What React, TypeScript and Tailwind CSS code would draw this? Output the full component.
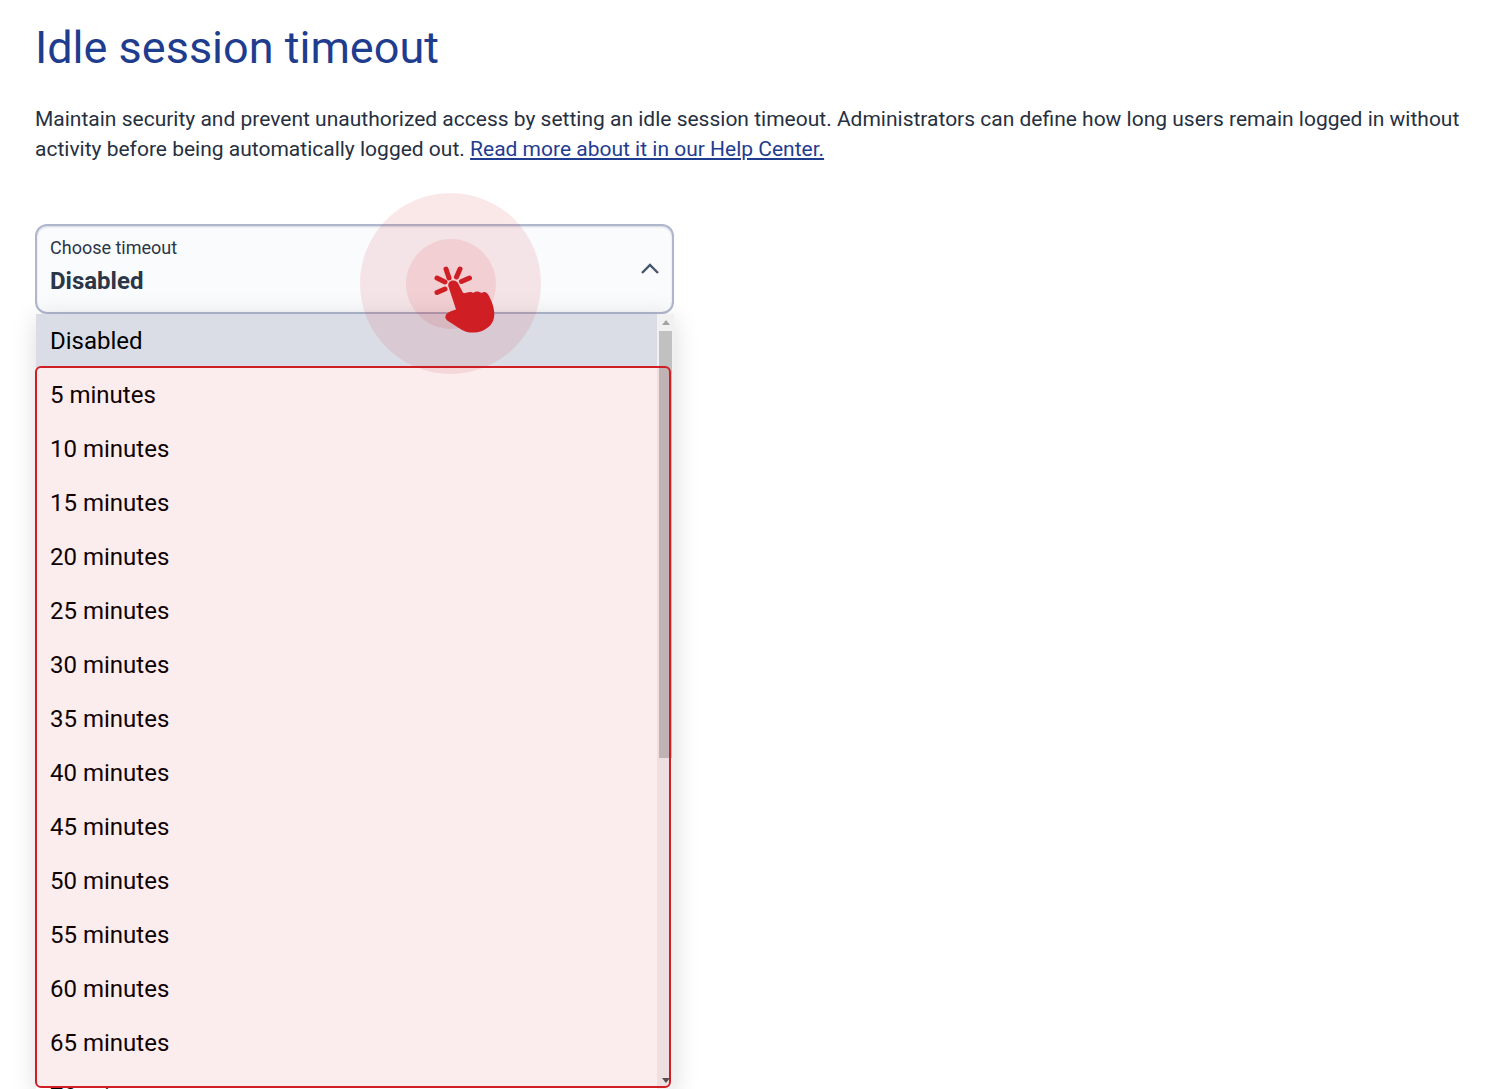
const options = [
  "Disabled",
  "5 minutes",
  "10 minutes",
  "15 minutes",
  "20 minutes",
  "25 minutes",
  "30 minutes",
  "35 minutes",
  "40 minutes",
  "45 minutes",
  "50 minutes",
  "55 minutes",
  "60 minutes",
  "65 minutes",
  "70 minutes",
];

function ClickMarker() {
  return (
    <div className="absolute left-[360px] top-[193px] flex h-[181px] w-[181px] items-center justify-center rounded-full bg-[#cf1f25]/10">
      <div className="h-[90px] w-[90px] rounded-full bg-[#cf1f25]/10" />
      <svg viewBox="0 0 100 100" className="absolute left-[45px] top-[47px] h-[100px] w-[100px]" fill="#cf1f25">
        <path d="M43.3 46C42.8 43 45 40.5 48 40.5C51 40.5 53 42 54 45L58 52.800C60 54 63 51.500 66 52C67.500 52.800 68 53 69 52.500C71 51 73.500 51.500 75.500 52.500C76.500 53 77.500 53 78 52.300C80 51.500 82.500 52.500 84 56C87 62 89.500 68 89.300 75C89 83 84 88 77 91C70 93.500 62 93 57 90L43 81C40 79 39.500 76 42 73.500C45 71 48 70.500 51 69.500Z" />
        <g stroke="#cf1f25" strokeWidth="5" strokeLinecap="round">
          <path d="M41 29L44 38" />
          <path d="M55 29L51.500 37" />
          <path d="M32 38L40 42" />
          <path d="M64.500 38L56.500 41.500" />
          <path d="M32 52.500L40 49" />
        </g>
      </svg>
    </div>
  );
}

export default function App() {
  return (
    <div className="relative h-[1089px] overflow-hidden bg-white font-['Roboto',sans-serif]">
      <div className="pl-[35px] pr-[30px] pt-[20px]">
        <h1 className="text-[45px] leading-[56px] font-normal text-[#1f3d8f]">Idle session timeout</h1>
        <p className="mt-[28px] text-[21px] leading-[30px] text-[#27303f]">
          Maintain security and prevent unauthorized access by setting an idle session timeout. Administrators can define how long users remain logged in without activity before being automatically logged out.{" "}
          <a href="#" className="text-[#1f3d8f] underline">Read more about it in our Help Center.</a>
        </p>

        <div className="mt-[60px] w-[639px]">
          <div className="flex h-[90px] items-center justify-between rounded-[12px] border-2 border-[#b0b7cd] bg-[#fafbfd] pb-[2px] pl-[13px] pr-[12px] shadow-[inset_0_1px_2px_rgba(90,100,130,0.25)]">
            <div className="mb-[6px]">
              <div className="text-[18px] leading-[24px] text-[#2b3648]">Choose timeout</div>
              <div className="mt-[7px] text-[24px] leading-[28px] font-bold text-[#2b3648]">Disabled</div>
            </div>
            <svg viewBox="0 0 20 12" className="h-[12px] w-[20px]" fill="none" stroke="#46546e" strokeWidth="2.4">
              <path d="M2 11L10 3L18 11" />
            </svg>
          </div>

          <div className="ml-px flex h-[780px] overflow-hidden shadow-[0_4px_24px_rgba(0,0,0,0.14)]">
            <ul className="flex-1 bg-white">
              {options.map((o, i) => (
                <li
                  key={o}
                  className={`flex h-[54px] items-center pl-[14px] text-[24px] text-black ${i === 0 ? "bg-[#dadde6]" : ""}`}
                >
                  {o}
                </li>
              ))}
            </ul>
            <div className="flex h-[775px] w-[17px] flex-col bg-[#f1f1f1] px-[2px]">
              <div className="flex h-[17px] items-center justify-center">
                <div className="h-0 w-0 border-x-[4px] border-b-[5px] border-x-transparent border-b-[#a3a3a3]" />
              </div>
              <div className="h-[427px] bg-[#c1c1c1]" />
              <div className="flex-1" />
              <div className="flex h-[17px] items-center justify-center">
                <div className="h-0 w-0 border-x-[4px] border-t-[5px] border-x-transparent border-t-[#505050]" />
              </div>
            </div>
          </div>
        </div>
      </div>

      <div className="absolute left-[35px] top-[366px] h-[722px] w-[636px] rounded-[6px] border-2 border-[#cf1f25] bg-[#cf1f25]/[0.08]" />
      <ClickMarker />
    </div>
  );
}
